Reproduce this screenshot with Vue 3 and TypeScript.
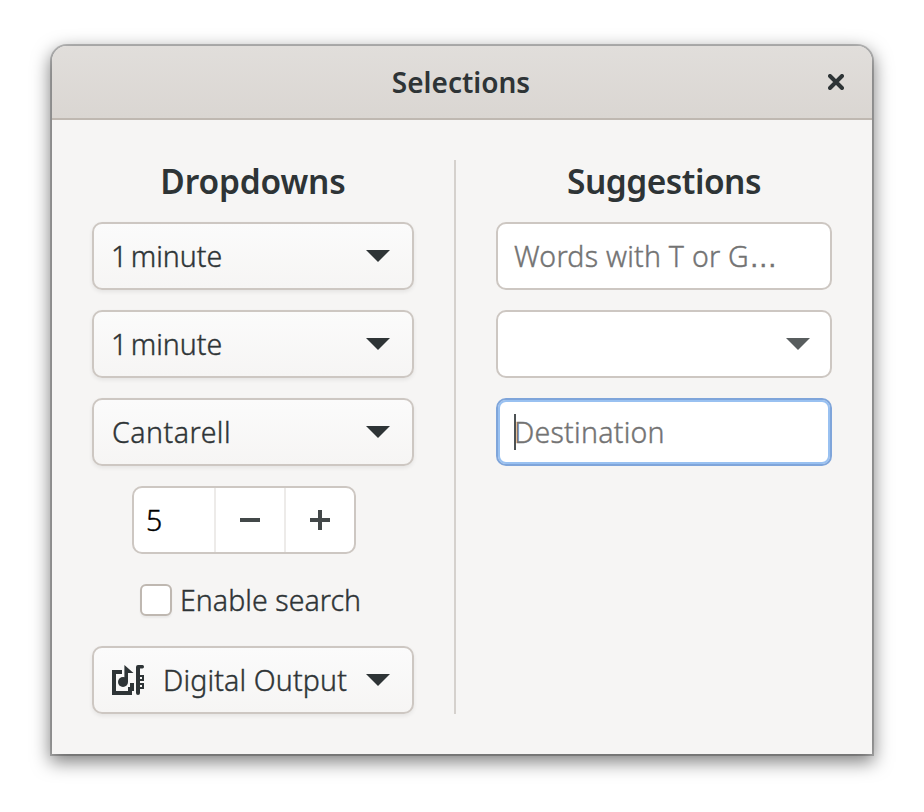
<script setup lang="ts">
interface Choice {
  label: string
  kind: string
}

const choices: Choice[] = [
  { label: '1 minute', kind: 'minute' },
  { label: '1 minute', kind: 'minute' },
  { label: 'Cantarell', kind: 'font' },
]
</script>

<template>
  <main class="desktop">
    <section class="window">
      <header class="titlebar">
        <span class="title">Selections</span>
        <svg class="close" viewBox="0 0 16 16">
          <path d="M2 2 14 14M14 2 2 14" />
        </svg>
      </header>
      <div class="content">
        <div class="column left">
          <h2 class="heading dropdowns">Dropdowns</h2>
          <div v-for="(choice, i) in choices" :key="i" class="button">
            <span class="text" :class="choice.kind">{{ choice.label }}</span>
            <svg class="arrow" viewBox="0 0 24 12"><path d="M0 0H24L12 12Z" /></svg>
          </div>
          <div class="spin">
            <span class="value">5</span>
            <span class="step"><svg viewBox="0 0 20 20"><path d="M0 8H20V12H0Z" /></svg></span>
            <span class="step"><svg viewBox="0 0 20 20"><path d="M0 8H8V0H12V8H20V12H12V20H8V12H0Z" /></svg></span>
          </div>
          <div class="check-row">
            <span class="check"></span>
            <span class="text enable">Enable search</span>
          </div>
          <div class="button">
            <svg class="audio" viewBox="0 0 32 32">
              <path d="M0 6H10V10H4V27H16V23H18V19H22V27H20V31H0Z" />
              <path d="M12.4 1 21.5 9H16V18H12.4Z" />
              <circle cx="11" cy="18" r="5" />
              <path d="M26 1H30.5Q32 1 32 2.7T30.5 4.5H28V11H32V17H28V19H32V25H28V29Q28 31 26 31T24 29V3Q24 1 26 1ZM28 13V15H30V13ZM28 21V23H30V21Z" fill-rule="evenodd" />
            </svg>
            <span class="text digital">Digital Output</span>
            <svg class="arrow" viewBox="0 0 24 12"><path d="M0 0H24L12 12Z" /></svg>
          </div>
        </div>
        <div class="separator"></div>
        <div class="column right">
          <h2 class="heading suggestions">Suggestions</h2>
          <div class="entry"><span class="text words">Words with T or G<span class="dots">…</span></span></div>
          <div class="entry">
            <svg class="arrow dim" viewBox="0 0 24 12"><path d="M0 0H24L12 12Z" /></svg>
          </div>
          <div class="entry focused"><i class="caret"></i><span class="text destination">Destination</span></div>
        </div>
      </div>
    </section>
  </main>
</template>

<style>
body {
  margin: 0;
  background: #fff;
}
</style>

<style scoped>
.desktop {
  box-sizing: border-box;
  width: 924px;
  height: 812px;
  padding: 46px 52px 58px;
  background: #fff;
  color: #2e3436;
  font-family: 'Noto Sans', sans-serif;
  font-size: 28.5px;
  line-height: 36px;
  white-space: nowrap;
}
.desktop * {
  box-sizing: border-box;
}
.window {
  height: 708px;
  border-radius: 15px 15px 0 0;
  background: #f6f5f4;
  box-shadow: 0 6px 18px 2px rgba(0, 0, 0, 0.5), 0 0 0 2px rgba(0, 0, 0, 0.23);
}
.titlebar {
  display: grid;
  grid-template-columns: 1fr auto 1fr;
  align-items: center;
  height: 74px;
  padding: 0 30px 0 28px;
  border-bottom: 2px solid #bfb8b1;
  border-radius: 15px 15px 0 0;
  background: linear-gradient(#e1dedb, #dad6d2);
}
.title {
  grid-column: 2;
  font-weight: 650;
  font-size: 28px;
}
.close {
  justify-self: end;
  width: 16px;
  height: 16px;
  margin-right: -2px;
  fill: none;
  stroke: #2e3436;
  stroke-width: 4;
  stroke-linecap: round;
}
.content {
  display: grid;
  grid-template-columns: 322px 2px 336px;
  gap: 40px;
  padding: 40px;
}
.column {
  display: flex;
  flex-direction: column;
  gap: 20px;
}
.heading {
  margin: 0;
  height: 42px;
  font-size: 33.5px;
  font-weight: 650;
  line-height: 42px;
  text-align: center;
}
.dropdowns {
  letter-spacing: -0.15px;
}
.suggestions {
  letter-spacing: -0.5px;
}
.text,
.value {
  font-weight: 300;
  -webkit-text-stroke: 0.4px currentColor;
}
.minute {
  margin-left: -1px;
  word-spacing: -4px;
}
.font {
  letter-spacing: 0.5px;
}
.enable {
  letter-spacing: 0.05px;
}
.digital {
  letter-spacing: 0.15px;
}
.words {
  letter-spacing: 0.25px;
}
.destination {
  letter-spacing: 0.25px;
}
.dots {
  font-family: 'Liberation Sans', sans-serif;
}
.button,
.entry,
.spin {
  display: flex;
  align-items: center;
  height: 68px;
  border: 2px solid #cdc7c2;
  border-radius: 10px;
}
.button {
  justify-content: space-between;
  padding: 0 22px 0 18px;
  background: linear-gradient(#fbfbfb, #f6f5f4);
  box-shadow: 0 2px 4px rgba(0, 0, 0, 0.07);
}
.entry {
  padding: 0 20px 0 16px;
  background: #fff;
  color: #737373;
}
.focused {
  border-color: #7fa5da;
  box-shadow: inset 0 0 0 2px #99c1f1;
}
.arrow {
  width: 24px;
  height: 12px;
  fill: #2e3436;
}
.dim {
  margin-left: auto;
  fill: #585d5e;
}
.caret {
  width: 2px;
  height: 36px;
  margin-right: -2px;
  background: #4d5254;
}
.spin {
  width: 224px;
  margin-left: 40px;
  background: #fff;
}
.value {
  flex: 1;
  padding-left: 12px;
  color: #000;
}
.step {
  display: flex;
  align-items: center;
  justify-content: center;
  width: 70px;
  height: 64px;
  border-left: 2px solid #edebe9;
}
.step svg {
  width: 20px;
  height: 20px;
  fill: #434849;
}
.check-row {
  display: flex;
  align-items: center;
  gap: 8px;
  height: 52px;
  padding-left: 48px;
}
.check {
  width: 32px;
  height: 32px;
  border: 2px solid #bfb8b1;
  border-radius: 6px;
  background: #fff;
  box-shadow: 0 2px 2px rgba(0, 0, 0, 0.05);
}
.audio {
  width: 32px;
  height: 32px;
  fill: #2e3436;
}
.separator {
  height: 554px;
  background: #d5d1cd;
}
</style>
